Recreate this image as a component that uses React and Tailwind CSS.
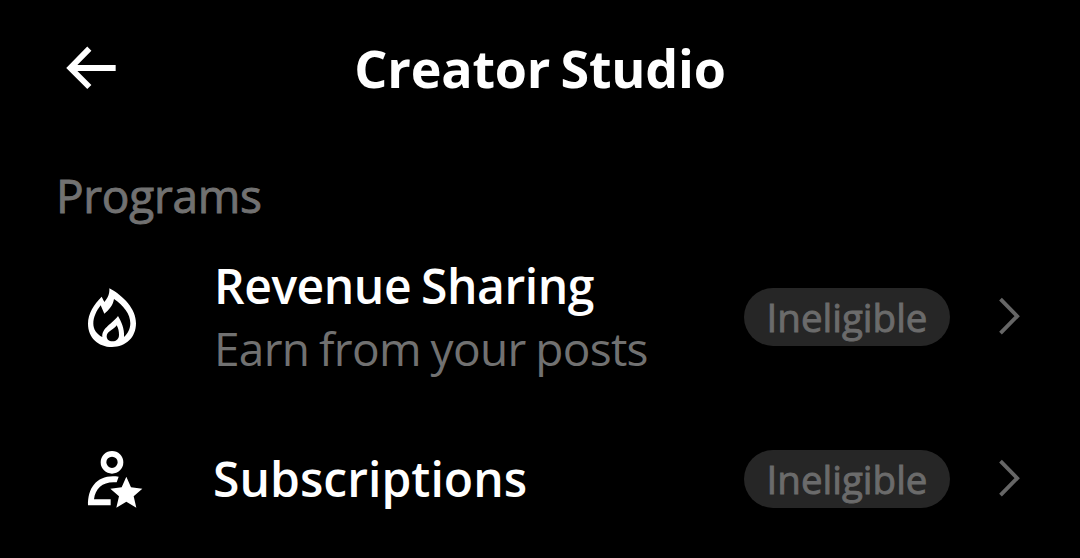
function BackArrow() {
  return (
    <svg className="h-[80px] w-[90px] shrink-0" viewBox="0 0 270 240" fill="none" stroke="#fff" strokeWidth="18">
      <path d="M118 56 61 114 118 171" strokeWidth="17.5" />
      <path d="M64 114H197" />
    </svg>
  );
}

function Flame() {
  return (
    <svg className="mt-[2px] h-[85px] w-[75px] shrink-0" viewBox="0 0 225 255" fill="#fff">
      <path
        fillRule="evenodd"
        d="M103 37C146 60 183 99 183 142C183 184 153 213 111 213C69 213 39 184 39 143C39 112 57 85 80 62L88 78C98 67 104 55 103 37ZM117 69C114 88 102 102 88 113L77 88C64 105 55 124 55 143C55 160 65 174 82 183C80 155 112 144 129 120C139 138 149 157 147 183C158 174 166 159 166 142C166 114 146 89 117 69ZM125 148C120 159 95 165 95 181C95 190 102 196 112 196C125 196 132 188 132 176C132 166 130 157 125 148Z"
      />
    </svg>
  );
}

function PersonStar() {
  return (
    <svg className="h-[80px] w-[75px] shrink-0" viewBox="0 2 225 240" fill="#fff">
      <circle cx="111" cy="72" r="25.5" fill="none" stroke="#fff" strokeWidth="17" />
      <path d="M131 115L125 132C86 128 61 148 57 183H107V201H39C38 144 70 106 131 115Z" />
      <path d="M154 115L168 147L202 151L176 174L184 208L154 190L124 208L132 174L106 151L140 147Z" />
    </svg>
  );
}

function Chevron() {
  return (
    <svg className="ml-[48px] h-[40px] w-[24px] shrink-0" viewBox="0 0 24 40" fill="none" stroke="#666" strokeWidth="3.8">
      <path d="M2.5 2.2 19.2 19.2 2.5 36.2" />
    </svg>
  );
}

function Badge() {
  return (
    <span className="flex h-[58px] w-[206px] shrink-0 items-center justify-center rounded-full bg-[#262626] text-[38.5px] leading-none tracking-[0px] whitespace-nowrap text-[#6b6b6b] [-webkit-text-stroke:0.9px_#6b6b6b]">
      Ineligible
    </span>
  );
}

function ProgramRow({ icon, children }) {
  return (
    <li className="flex items-center pr-[58px] pl-[75px]">
      {icon}
      <div className="ml-[64px] flex-1 whitespace-nowrap">{children}</div>
      <Badge />
      <Chevron />
    </li>
  );
}

export default function App() {
  return (
    <main className="h-[558px] w-[1080px] overflow-hidden bg-black font-['Open_Sans',sans-serif] text-white">
      <header className="grid h-[136px] grid-cols-[300px_1fr_300px] items-center">
        <div className="pt-[4px] pl-[50px]">
          <BackArrow />
        </div>
        <h1 className="text-center text-[52px] leading-[60px] font-bold tracking-[-0.2px] [word-spacing:-3px] whitespace-nowrap">Creator Studio</h1>
      </header>
      <h2 className="mt-[29px] pl-[56px] text-[46px] leading-[60px] tracking-[-0.3px] text-[#717171] [-webkit-text-stroke:0.9px_#717171]">Programs</h2>
      <ul className="mt-[30px]">
        <ProgramRow icon={<Flame />}>
          <p className="text-[48px] leading-[62px] font-semibold tracking-[-0.45px] [word-spacing:-2px]">Revenue Sharing</p>
          <p className="text-[46px] leading-[62px] tracking-[-0.7px] [word-spacing:-1.5px] text-[#717171]">Earn from your posts</p>
        </ProgramRow>
        <li className="h-[60px]" aria-hidden="true" />
        <ProgramRow icon={<PersonStar />}>
          <p className="-ml-px text-[48px] leading-[62px] font-semibold tracking-[0.05px]">Subscriptions</p>
        </ProgramRow>
      </ul>
    </main>
  );
}
